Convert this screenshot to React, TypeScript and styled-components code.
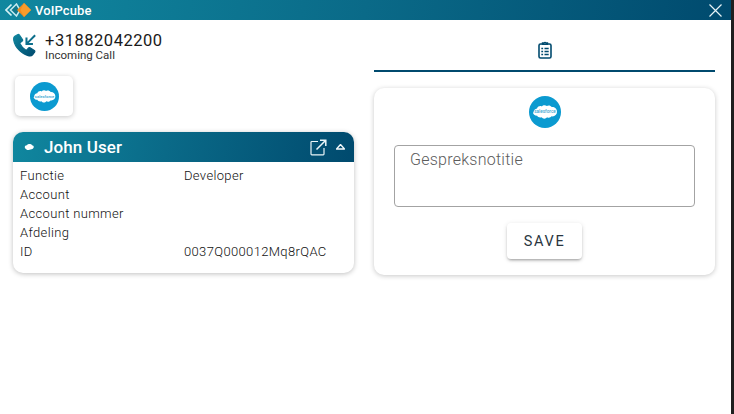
import { Fragment } from "react";
import styled, { createGlobalStyle } from "styled-components";

const brandGradient = "linear-gradient(100deg, #10879f 0%, #0a6a88 45%, #004a6e 100%)";

const GlobalStyle = createGlobalStyle`
  html, body {
    margin: 0;
    height: 100%;
    background: #1f1f1f;
    overflow: hidden;
  }
  body {
    font-family: Roboto, "Liberation Sans", sans-serif;
    color: #222;
  }
`;

const Window = styled.div`
  width: 731px;
  height: 414px;
  background: #fff;
  display: flex;
  flex-direction: column;
`;

const TitleBar = styled.header`
  height: 20px;
  flex: none;
  display: flex;
  align-items: center;
  justify-content: space-between;
  padding: 0 9px 0 5px;
  background: linear-gradient(100deg, #10879f 0%, #0a6a88 50%, #004a6e 100%);
  color: #fff;
`;

const Brand = styled.div`
  display: flex;
  align-items: center;
  gap: 4px;
  font-size: 13px;
  font-weight: 500;
  letter-spacing: 0.1px;
`;

const Columns = styled.main`
  flex: 1;
  display: grid;
  grid-template-columns: 341px 341px;
  gap: 20px;
  padding: 0 16px 0 13px;
  align-items: start;
`;

const Column = styled.section`
  display: flex;
  flex-direction: column;
`;

const CallRow = styled.div`
  height: 56px;
  display: flex;
  align-items: flex-start;
  gap: 8px;
  padding-top: 12px;
  box-sizing: border-box;

  svg {
    margin-top: 1px;
  }
`;

const CallText = styled.div`
  display: flex;
  flex-direction: column;
`;

const Number = styled.div`
  font-size: 16.5px;
  line-height: 18px;
  letter-spacing: 0.52px;
  color: #1a1a1a;
`;

const CallLabel = styled.div`
  font-size: 11.5px;
  line-height: 11px;
  color: #333;
`;

const CrmTile = styled.div`
  width: 58px;
  height: 40px;
  margin-left: 2px;
  border-radius: 5px;
  display: flex;
  align-items: center;
  justify-content: center;
  background: #fff;
  box-shadow: 0 1px 5px rgba(0, 0, 0, 0.22);
`;

const ContactCard = styled.article`
  margin-top: 16px;
  height: 141px;
  border-radius: 10px;
  overflow: hidden;
  background: #fff;
  box-shadow: 0 1px 5px rgba(0, 0, 0, 0.25);
`;

const CardHeader = styled.div`
  height: 30px;
  display: flex;
  align-items: center;
  padding: 0 9px 0 11px;
  color: #fff;
  background: ${brandGradient};
`;

const ContactName = styled.h2`
  flex: 1;
  margin: 0 0 0 10px;
  font-size: 17px;
  font-weight: 500;
  letter-spacing: 0.1px;
`;

const HeaderIcons = styled.div`
  display: flex;
  align-items: center;
  gap: 9px;
`;

const Fields = styled.dl`
  margin: 4px 0 0;
  padding-left: 7px;
  display: grid;
  grid-template-columns: 164px 1fr;
  grid-auto-rows: 19px;
  font-size: 13px;
  font-weight: 300;
  line-height: 19px;
  color: #111;
  letter-spacing: 0.35px;
`;

const FieldLabel = styled.dt`
  margin: 0;
`;

const FieldValue = styled.dd`
  margin: 0;
`;

const Tabs = styled.div`
  height: 52px;
  padding-top: 10px;
  box-sizing: border-box;
  display: flex;
  align-items: center;
  justify-content: center;
  border-bottom: 2px solid #004a6e;
`;

const NoteCard = styled.div`
  margin-top: 16px;
  height: 187px;
  padding: 8px 20px 0;
  box-sizing: border-box;
  display: flex;
  flex-direction: column;
  align-items: center;
  border-radius: 10px;
  background: #fff;
  box-shadow: 0 1px 5px rgba(0, 0, 0, 0.22);
`;

const NoteField = styled.div`
  width: 301px;
  height: 62px;
  margin-top: 17px;
  padding: 4px 15px;
  box-sizing: border-box;
  border: 1px solid #a3a3a3;
  border-radius: 4px;
  font-size: 16px;
  font-weight: 300;
  line-height: 20px;
  letter-spacing: 0.25px;
  color: #5c5c5c;
`;

const SaveButton = styled.button`
  width: 75px;
  height: 36px;
  margin-top: 16px;
  border: 0;
  border-radius: 4px;
  background: #fff;
  font-family: inherit;
  font-size: 14.5px;
  font-weight: 400;
  letter-spacing: 1.7px;
  color: #2a3640;
  box-shadow: 0 2px 3px -1px rgba(0, 0, 0, 0.35), 0 1px 5px rgba(0, 0, 0, 0.12);
`;

const CubeLogo = () => (
  <svg width="26" height="14" viewBox="0 0 26 14">
    <path d="M6.500 1.500 1 7l5.500 5.500" fill="none" stroke="#d5f1f4" strokeWidth="1.700" />
    <path d="M11.500 1 5.500 7l6 6L15 7Z" fill="#12788c" stroke="#c4ebf0" strokeWidth="1.500" />
    <path d="M19 0 12 7l7 7 7-7Z" fill="#f28a1e" />
    <path d="M19 0 15.500 7 19 14l7-7Z" fill="#fa9c2c" />
  </svg>
);

const CloseIcon = () => (
  <svg width="13" height="13" viewBox="0 0 13 13">
    <path d="M.5.5l12 12M12.500.5l-12 12" stroke="#e6f3f6" strokeWidth="1.200" />
  </svg>
);

const CallIcon = () => (
  <svg width="24" height="25" viewBox="0 0 26 26">
    <defs>
      <linearGradient id="call" x1="0" y1="0" x2="1" y2="1">
        <stop offset="0" stopColor="#10879f" />
        <stop offset="1" stopColor="#004a6e" />
      </linearGradient>
    </defs>
    <path
      d="M5.200 1.200 1.600 3.200C.6 4 .5 5.600.8 7.400 2 14.600 9.400 22.400 16.400 24c2 .5 3.800.3 4.800-.8l2.200-3c.4-.6.3-1.300-.3-1.700l-4.600-3c-.6-.4-1.200-.3-1.700.2l-1.700 1.900c-.4.4-.9.5-1.400.2-2.600-1.600-4.800-4.200-6-6.800-.2-.5-.1-1 .3-1.300l2-1.600c.5-.4.6-1 .3-1.600L7 1.700c-.4-.7-1.100-.9-1.800-.5Z"
      fill="url(#call)"
      stroke="url(#call)"
      strokeWidth="1.200"
    />
    <path d="M24 2 15.500 10.400M14.600 4.400v6.900h7" fill="none" stroke="#0d6f8c" strokeWidth="2.200" />
  </svg>
);

const SalesforceBadge = ({ size }: { size: number }) => (
  <svg width={size} height={size} viewBox="0 0 32 32">
    <circle cx="16" cy="16" r="16" fill="#0b9ad0" />
    <path
      d="M4.500 16.500c0-2.400 1.600-3.900 3.500-4.100.9-2 3-2.900 4.800-2 1.100-1.400 3.500-1.700 5-.4 1.700-1 4-.5 4.900 1.100 2.800-.3 5.300 1.700 5.300 4.700 0 3.200-2.600 5-5.400 4.500-1 1.500-3.200 1.800-4.500.9-1.300 1.900-4.300 1.900-5.500 0-1.800.6-3.700 0-4.500-1.500-2.300 0-4.100-1.600-4.100-3.200Z"
      fill="#fff"
    />
    <text x="16" y="17.400" textAnchor="middle" fontSize="4.600" fontWeight="500" fill="#3aa6d2" fontFamily="Roboto, sans-serif">
      salesforce
    </text>
  </svg>
);

const SmallCloud = () => (
  <svg width="10" height="7" viewBox="0 0 10 7">
    <path d="M1 4c-.8-1.500.4-3 2-2.800C4-.2 7-.3 8 1.200c1.500 0 2.200 1.600 1.500 2.600C9 5.400 7 5.600 6 5.400 4.500 6.600 2.500 6.400 1 4Z" fill="#fff" />
  </svg>
);

const OpenIcon = () => (
  <svg width="17" height="17" viewBox="0 0 17 17" fill="none">
    <path d="M8 2.500H1.800a.8.800 0 0 0-.8.800V15a.8.800 0 0 0 .8.800h11.400a.8.800 0 0 0 .8-.8V9" stroke="#eaf5f8" strokeWidth="1.200" />
    <path d="M6.500 10.500 15 2M10 1.200h5.800V7" stroke="#eaf5f8" strokeWidth="1.500" />
  </svg>
);

const CollapseIcon = () => (
  <svg width="9" height="6" viewBox="0 0 9 6">
    <path d="M4.500.5 8.500 5H.5Z" fill="none" stroke="#f2f8fa" strokeWidth="1.300" strokeLinejoin="round" />
  </svg>
);

const NotesIcon = () => (
  <svg width="14" height="18" viewBox="0 0 14 18" fill="none">
    <rect x="1" y="3" width="12" height="14" rx="1.500" stroke="#004a6e" strokeWidth="1.600" />
    <path d="M4.500 3.400V2h1.600a1 1 0 0 1 1.800 0h1.600v1.400Z" stroke="#004a6e" strokeWidth="1.400" fill="#fff" />
    <path d="M3.300 7.500h1.800M6.500 7.500h4.200M3.300 10.500h1.800M6.500 10.500h4.200M3.300 13.500h1.800M6.500 13.500h4.200" stroke="#004a6e" strokeWidth="1.400" />
  </svg>
);

const contactFields = [
  { label: "Functie", value: "Developer" },
  { label: "Account", value: "" },
  { label: "Account nummer", value: "" },
  { label: "Afdeling", value: "" },
  { label: "ID", value: "0037Q000012Mq8rQAC" },
];

export default function App() {
  return (
    <>
      <GlobalStyle />
      <Window>
        <TitleBar>
          <Brand>
            <CubeLogo />
            VoIPcube
          </Brand>
          <CloseIcon />
        </TitleBar>
        <Columns>
          <Column>
            <CallRow>
              <CallIcon />
              <CallText>
                <Number>+31882042200</Number>
                <CallLabel>Incoming Call</CallLabel>
              </CallText>
            </CallRow>
            <CrmTile>
              <SalesforceBadge size={29} />
            </CrmTile>
            <ContactCard>
              <CardHeader>
                <SmallCloud />
                <ContactName>John User</ContactName>
                <HeaderIcons>
                  <OpenIcon />
                  <CollapseIcon />
                </HeaderIcons>
              </CardHeader>
              <Fields>
                {contactFields.map((field) => (
                  <Fragment key={field.label}>
                    <FieldLabel>{field.label}</FieldLabel>
                    <FieldValue>{field.value}</FieldValue>
                  </Fragment>
                ))}
              </Fields>
            </ContactCard>
          </Column>
          <Column>
            <Tabs>
              <NotesIcon />
            </Tabs>
            <NoteCard>
              <SalesforceBadge size={32} />
              <NoteField>Gespreksnotitie</NoteField>
              <SaveButton>SAVE</SaveButton>
            </NoteCard>
          </Column>
        </Columns>
      </Window>
    </>
  );
}
